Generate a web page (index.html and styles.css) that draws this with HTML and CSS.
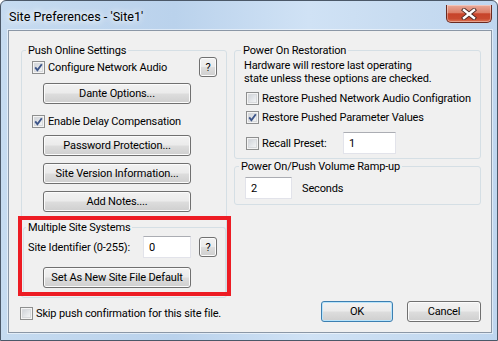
FILE: index.html
```html
<!DOCTYPE html>
<html lang="en">
<head>
  <meta charset="UTF-8" />
  <title>Site Preferences - 'Site1'</title>
  <link rel="stylesheet" href="styles.css">
</head>
<body>

  <div class="window">
    <div class="titlebar">
      <span class="title">Site Preferences - 'Site1'</span>
      <button class="close-x">
        <svg width="16" height="12" viewBox="0 0 16 12">
          <path d="M3 2 L13 10 M13 2 L3 10" stroke="#4a2a24" stroke-width="4.2" stroke-linecap="square" />
          <path d="M3 2 L13 10 M13 2 L3 10" stroke="#fff" stroke-width="2.4" stroke-linecap="square" />
        </svg>
      </button>
    </div>

    <div class="client">
      <div class="columns">
        <fieldset class="group push-group">
          <legend>Push Online Settings</legend>
          <div class="row-top">
            <label class="check"><span class="box checked"><svg viewBox="0 0 11 11"><path d="M2.2 5.4 L4.4 8.2 L8.8 2.2" /></svg></span>Configure Network Audio</label>
            <button class="btn help">?</button>
          </div>
          <button class="btn wide dante">Dante Options...</button>
          <label class="check delay"><span class="box checked"><svg viewBox="0 0 11 11"><path d="M2.2 5.4 L4.4 8.2 L8.8 2.2" /></svg></span>Enable Delay Compensation</label>
          <button class="btn wide password">Password Protection...</button>
          <button class="btn wide stack">Site Version Information...</button>
          <button class="btn wide stack">Add Notes....</button>

          <div class="highlight">
            <fieldset class="group sub-group">
              <legend>Multiple Site Systems</legend>
              <div class="id-row">
                <span class="id-label">Site Identifier (0-255):</span>
                <input class="field id-field" type="text" value="0" />
                <button class="btn help">?</button>
              </div>
              <button class="btn wide default-btn">Set As New Site File Default</button>
            </fieldset>
          </div>
        </fieldset>

        <div class="right-col">
          <fieldset class="group restore-group">
            <legend>Power On Restoration</legend>
            <p class="note">Hardware will restore last operating</p>
            <p class="note">state unless these options are checked.</p>
            <label class="check first"><span class="box"></span>Restore Pushed Network Audio Configration</label>
            <label class="check"><span class="box checked"><svg viewBox="0 0 11 11"><path d="M2.2 5.4 L4.4 8.2 L8.8 2.2" /></svg></span>Restore Pushed Parameter Values</label>
            <div class="preset-row">
              <label class="check preset-label"><span class="box"></span>Recall Preset:</label>
              <input class="field preset-field" type="text" value="1" />
            </div>
          </fieldset>

          <fieldset class="group ramp-group">
            <legend>Power On/Push Volume Ramp-up</legend>
            <div class="ramp-row">
              <input class="field ramp-field" type="text" value="2" />
              <span class="unit">Seconds</span>
            </div>
          </fieldset>
        </div>
      </div>

      <div class="footer">
        <label class="check skip"><span class="box"></span>Skip push confirmation for this site file.</label>
        <div class="actions">
          <button class="btn action ok">OK</button>
          <button class="btn action">Cancel</button>
        </div>
      </div>
    </div>
  </div>

</body>
</html>
```

FILE: styles.css
```css
* { box-sizing: border-box; margin: 0; padding: 0; }
body {
  margin: 0;
  background: #fff;
  font: 11px/15px Roboto, "Liberation Sans", sans-serif;
  letter-spacing: -0.15px;
  color: #000;
}

button, input { font: inherit; color: inherit; letter-spacing: inherit; }

.window {
  width: 498px;
  height: 341px;
  border: 1px solid #4b5868;
  border-radius: 6px 6px 0 0;
  background: linear-gradient(90deg, #c6dbf0 0%, #bad2ec 35%, #d0e2f5 62%, #c8dcf1 80%, #bfd6ef 100%);
  padding: 0 5px 7px 7px;
  display: flex;
  flex-direction: column;
}

.titlebar {
  height: 29px;
  display: flex;
  align-items: flex-start;
  justify-content: space-between;
}

.title {
  margin: 8px 0 0 1px;
  font-size: 12.6px;
  letter-spacing: 0;
  text-shadow: 0 0 6px #fff, 0 0 10px #fff;
}

.close-x {
  width: 46px;
  height: 18px;
  margin-top: 4px;
  border: 1px solid #6b2a20;
  border-top: none;
  border-radius: 0 0 5px 5px;
  background: linear-gradient(#e9a898 0%, #dc8069 45%, #c7442a 52%, #c94a2f 80%, #de7555 100%);
  box-shadow: inset 0 0 0 1px rgba(255,255,255,0.35);
  display: flex;
  align-items: center;
  justify-content: center;
}

.client {
  flex: 1;
  background: #f0f0f0;
  border: 1px solid #8b97a6;
  box-shadow: 0 0 0 1px rgba(255,255,255,0.5);
  padding: 12px 10px 9px 12px;
  display: flex;
  flex-direction: column;
}

.columns {
  display: flex;
  gap: 7px;
  align-items: flex-start;
}

/* group boxes */
.group {
  border: 1px solid #d5dfe5;
  border-radius: 3px;
  min-width: 0;
}

.group legend {
  padding: 0 2px;
  white-space: nowrap;
}

.push-group {
  width: 206px;
  padding: 0 9px 0 4px;
}

.row-top {
  display: flex;
  align-items: center;
  justify-content: space-between;
  height: 20px;
  margin: -1px 0 0 6px;
}

/* checkboxes */
.check {
  display: flex;
  align-items: center;
  gap: 3px;
  height: 15px;
  white-space: nowrap;
}

.box {
  width: 13px;
  height: 13px;
  flex: none;
  border: 1px solid #8e8f8f;
  background: linear-gradient(135deg, #c9cdd3 0%, #eceef0 70%, #f8f8f8 100%);
  box-shadow: inset 0 0 0 1px #f4f4f4, inset 0 0 0 2px #d8dadd;
}

.box svg {
  display: block;
  width: 11px;
  height: 11px;
}

.box svg path {
  fill: none;
  stroke: #3d5589;
  stroke-width: 1.9;
}

.delay {
  margin: 10px 0 0 6px;
}

/* buttons */
.btn {
  display: block;
  height: 21px;
  border: 1px solid #707070;
  border-radius: 3px;
  background: linear-gradient(#f2f2f2 0%, #ebebeb 48%, #dddddd 52%, #cfcfcf 100%);
  box-shadow: inset 0 0 0 1px #fbfbfb;
  text-align: center;
  line-height: 17px;
  white-space: nowrap;
  cursor: pointer;
}

.help {
  width: 18px;
  height: 20px;
  flex: none;
}

.wide {
  width: 148px;
  margin-left: 17px;
}

.dante { margin-top: 6px; }
.password { margin-top: 6px; }
.stack { margin-top: 7px; }

/* red annotation */
.highlight {
  margin: 4px -14px 1px -8px;
  border: 4px solid #ed1c24;
}

.sub-group {
  margin: 0 1px;
  padding: 0 0 4px 4px;
  border-bottom: none;
  border-radius: 3px 3px 0 0;
}

.sub-group legend {
  margin-left: -2px;
}

.id-row {
  display: flex;
  align-items: center;
  height: 22px;
  margin-top: 1px;
}

.id-label {
  width: 115px;
  white-space: nowrap;
}

.field {
  height: 22px;
  background: #fff;
  border: 1px solid #e2e3ea;
  border-top-color: #abadb3;
  padding: 0 5px;
  outline: none;
}

.id-field {
  width: 48px;
}

.id-row .help {
  margin-left: 8px;
}

.default-btn {
  margin-top: 9px;
  margin-left: 15px;
}

/* right column */
.right-col {
  width: 247px;
  display: flex;
  flex-direction: column;
}

.restore-group {
  height: 116px;
  padding: 1px 6px 0 6px;
}

.note {
  margin-left: 3px;
  height: 13px;
  line-height: 13px;
  white-space: nowrap;
}

.restore-group .check {
  margin-left: 5px;
  margin-top: 4px;
}

.restore-group .check.first {
  margin-top: 6px;
}

.preset-row {
  display: flex;
  align-items: center;
  height: 22px;
  margin: 7px 0 0 5px;
}

.restore-group .preset-label {
  width: 97px;
  margin: 0;
}

.preset-field {
  width: 53px;
}

.ramp-group {
  height: 46px;
  padding: 3px 6px 0 4px;
}

.ramp-row {
  display: flex;
  align-items: center;
  margin-left: 6px;
}

.ramp-field {
  width: 47px;
}

.unit {
  margin-left: 10px;
}

/* footer */
.footer {
  display: flex;
  align-items: center;
  justify-content: space-between;
  height: 21px;
  margin-top: 3px;
}

.skip {
  margin: 3px 0 0 -1px;
}

.actions {
  display: flex;
  gap: 14px;
}

.action {
  width: 74px;
}

.ok {
  width: 72px;
  border-color: #3c7fb1;
  box-shadow: inset 0 0 0 1px #b9e4fb;
}
```
